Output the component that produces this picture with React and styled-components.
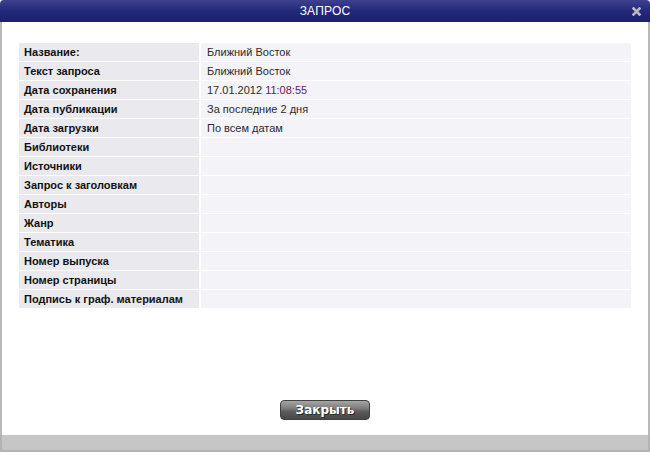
import styled, { createGlobalStyle } from "styled-components"

const GlobalStyle = createGlobalStyle`
    html, body {
        margin: 0;
        padding: 0;
        background: #ffffff;
    }
    * {
        box-sizing: border-box;
    }
`

const Window = styled.div`
    width: 650px;
    height: 452px;
    display: flex;
    flex-direction: column;
    font-family: "Liberation Sans", Arial, sans-serif;
    background: #ffffff;
`

const Header = styled.div`
    height: 22px;
    flex: none;
    position: relative;
    display: flex;
    align-items: center;
    justify-content: center;
    border-radius: 4px 4px 0 0;
    background: linear-gradient(to bottom, #3d418e 0%, #262a7c 45%, #1c1f6e 100%);
    color: #ffffff;
    font-size: 12px;
    letter-spacing: 0.2px;
`

const CloseBtn = styled.button`
    position: absolute;
    right: 9px;
    top: 7px;
    width: 9px;
    height: 9px;
    padding: 0;
    border: none;
    background: none;
    display: flex;
    cursor: pointer;
`

const Body = styled.div`
    flex: 1;
    display: flex;
    flex-direction: column;
    border-left: 2px solid #b9b9b9;
    border-right: 2px solid #b9b9b9;
    padding: 21px 17px 0 17px;
`

const Table = styled.div`
    display: flex;
    flex-direction: column;
    gap: 2px;
    width: 612px;
`

const Row = styled.div`
    display: grid;
    grid-template-columns: 180px 430px;
    gap: 2px;
    height: 17px;
`

const Label = styled.div`
    background: #e9e9ee;
    color: #111111;
    font-size: 11px;
    font-weight: bold;
    line-height: 18px;
    padding-left: 5px;
    white-space: nowrap;
`

const Value = styled.div`
    background: #f3f3f8;
    color: #2b2b2b;
    font-size: 11px;
    line-height: 18px;
    padding-left: 6px;
    white-space: nowrap;
`

const Time = styled.span`
    color: #6b1568;
`

const Footer = styled.div`
    margin-top: auto;
    display: flex;
    justify-content: center;
    padding-bottom: 15px;
`

const Button = styled.button`
    width: 90px;
    height: 20px;
    border: 1px solid #404040;
    border-radius: 4px;
    background: linear-gradient(to bottom, #a6a6a6 0%, #7c7c7c 40%, #5a5a5a 60%, #474747 100%);
    color: #ffffff;
    font-family: "DejaVu Sans", Verdana, sans-serif;
    font-weight: bold;
    font-size: 12px;
    line-height: 16px;
    text-shadow: 1px 1px 0 #2a2a2a;
    padding: 0;
    cursor: pointer;
`

const BottomBar = styled.div`
    height: 17px;
    flex: none;
    background: #c6c6c6;
    border-left: 2px solid #b4b4b4;
    border-bottom: 2px solid #b4b4b4;
    border-right: 2px solid #b4b4b4;
`

const rows = [
    ["Название:", "Ближний Восток"],
    ["Текст запроса", "Ближний Восток"],
    ["Дата сохранения", "17.01.2012", "11:08:55"],
    ["Дата публикации", "За последние 2 дня"],
    ["Дата загрузки", "По всем датам"],
    ["Библиотеки", ""],
    ["Источники", ""],
    ["Запрос к заголовкам", ""],
    ["Авторы", ""],
    ["Жанр", ""],
    ["Тематика", ""],
    ["Номер выпуска", ""],
    ["Номер страницы", ""],
    ["Подпись к граф. материалам", ""],
]

export default function App() {
    return (
        <>
            <GlobalStyle />
            <Window>
                <Header>
                    ЗАПРОС
                    <CloseBtn aria-label="close">
                        <svg width="9" height="9" viewBox="0 0 9 9">
                            <path d="M1.5 1.5 L7.5 7.5 M7.5 1.5 L1.5 7.5" stroke="#b9b9c6" strokeWidth="2.6" strokeLinecap="square" />
                        </svg>
                    </CloseBtn>
                </Header>
                <Body>
                    <Table>
                        {rows.map(([label, value, time]) => (
                            <Row key={label}>
                                <Label>{label}</Label>
                                <Value>
                                    {value}
                                    {time && <> <Time>{time}</Time></>}
                                </Value>
                            </Row>
                        ))}
                    </Table>
                    <Footer>
                        <Button>Закрыть</Button>
                    </Footer>
                </Body>
                <BottomBar />
            </Window>
        </>
    )
}
